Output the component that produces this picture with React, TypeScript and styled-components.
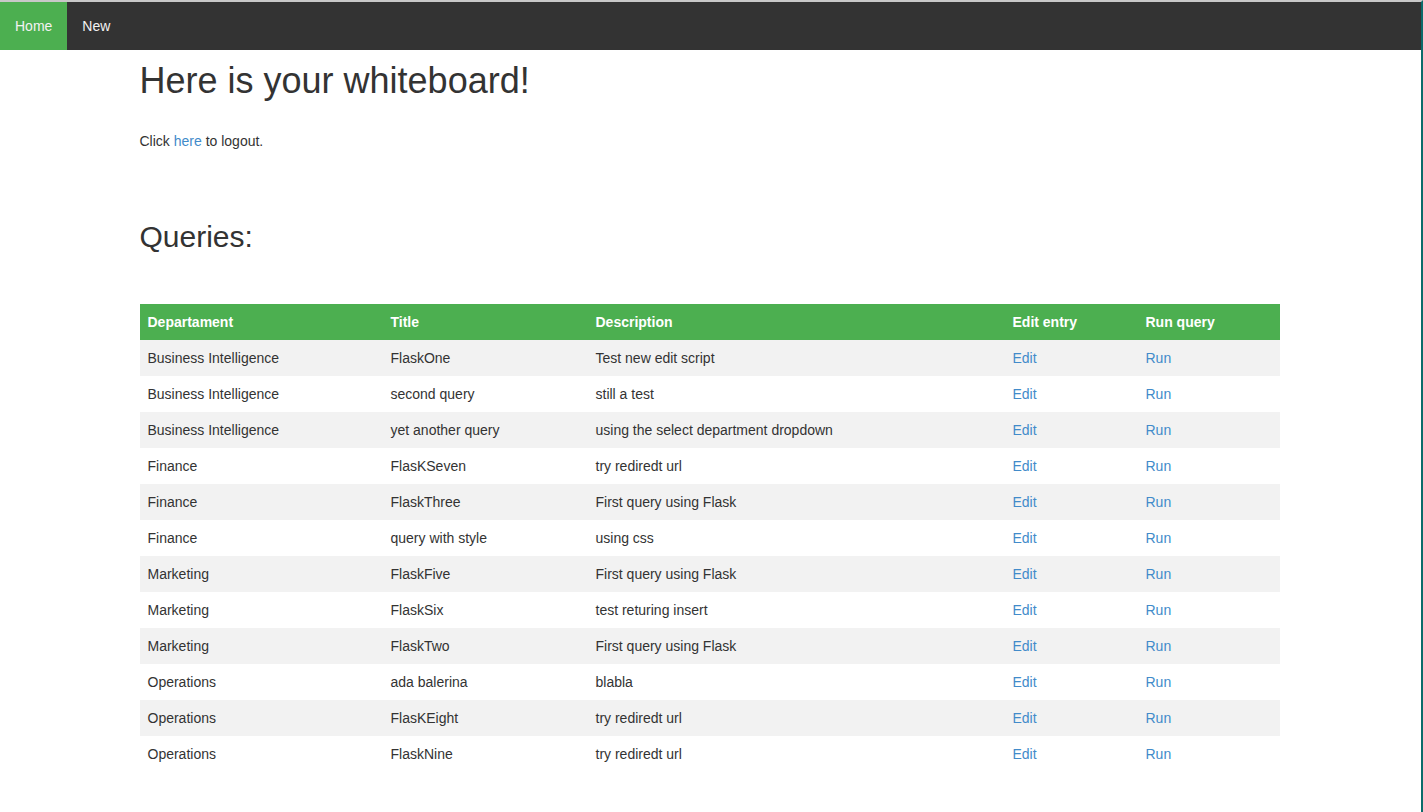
import React from "react";
import styled, { createGlobalStyle } from "styled-components";

const GlobalStyle = createGlobalStyle`
  html, body { margin: 0; padding: 0; background: #fff; }
  body {
    font-family: "Liberation Sans", Arial, Helvetica, sans-serif;
    font-size: 14px;
    line-height: 20px;
    color: #333;
  }
  * { box-sizing: border-box; }
`;

const Page = styled.div`
  min-height: 812px;
  border-top: 2px solid #c8c8c8;
  border-right: 2px solid #0b6b6b;
`;

const TopNav = styled.nav`
  display: flex;
  background: #333;
  height: 48px;
`;

const NavLink = styled.a<{ $active?: boolean }>`
  display: block;
  padding: 14px 15px;
  color: #f2f2f2;
  text-decoration: none;
  font-size: 14px;
  line-height: 20px;
  background: ${(p) => (p.$active ? "#4CAF50" : "transparent")};
`;

const Container = styled.main`
  width: 1170px;
  padding: 0 15px;
  margin: 0 auto;
  position: relative;
  left: -1px;
`;

const Title = styled.h1`
  font-size: 36px;
  font-weight: 500;
  line-height: 1.1;
  margin: 11px 0 0;
  color: #333;
`;

const Para = styled.p`
  margin: 30px 0 0;
`;

const Link = styled.a`
  color: #428bca;
  text-decoration: none;
`;

const SubTitle = styled.h2`
  font-size: 30px;
  font-weight: 500;
  line-height: 33px;
  margin: 69px 0 0;
  color: #333;
`;

const Table = styled.table`
  width: 1140px;
  margin-top: 51px;
  border-collapse: collapse;
  border-spacing: 0;
  table-layout: fixed;
`;

const HeadCell = styled.th<{ $w: number }>`
  width: ${(p) => p.$w}px;
  background: #4caf50;
  color: #fff;
  font-weight: bold;
  text-align: left;
  padding: 8px;
  line-height: 20px;
`;

const Row = styled.tr<{ $striped: boolean }>`
  background: ${(p) => (p.$striped ? "#f2f2f2" : "#fff")};
`;

const Cell = styled.td`
  padding: 8px;
  line-height: 20px;
  text-align: left;
`;

const columns: [string, number][] = [
  ["Departament", 243],
  ["Title", 205],
  ["Description", 417],
  ["Edit entry", 133],
  ["Run query", 142],
];

const rows: [string, string, string][] = [
  ["Business Intelligence", "FlaskOne", "Test new edit script"],
  ["Business Intelligence", "second query", "still a test"],
  ["Business Intelligence", "yet another query", "using the select department dropdown"],
  ["Finance", "FlasKSeven", "try rediredt url"],
  ["Finance", "FlaskThree", "First query using Flask"],
  ["Finance", "query with style", "using css"],
  ["Marketing", "FlaskFive", "First query using Flask"],
  ["Marketing", "FlaskSix", "test returing insert"],
  ["Marketing", "FlaskTwo", "First query using Flask"],
  ["Operations", "ada balerina", "blabla"],
  ["Operations", "FlasKEight", "try rediredt url"],
  ["Operations", "FlaskNine", "try rediredt url"],
];

export default function App() {
  return (
    <Page>
      <GlobalStyle />
      <TopNav>
        <NavLink $active href="#">Home</NavLink>
        <NavLink href="#">New</NavLink>
      </TopNav>
      <Container>
        <Title>Here is your whiteboard!</Title>
        <Para>
          Click <Link href="#">here</Link> to logout.
        </Para>
        <SubTitle>Queries:</SubTitle>
        <Table>
          <thead>
            <tr>
              {columns.map(([c, w]) => (
                <HeadCell key={c} $w={w}>{c}</HeadCell>
              ))}
            </tr>
          </thead>
          <tbody>
            {rows.map((r, i) => (
              <Row key={i} $striped={i % 2 === 0}>
                <Cell>{r[0]}</Cell>
                <Cell>{r[1]}</Cell>
                <Cell>{r[2]}</Cell>
                <Cell><Link href="#">Edit</Link></Cell>
                <Cell><Link href="#">Run</Link></Cell>
              </Row>
            ))}
          </tbody>
        </Table>
      </Container>
    </Page>
  );
}
